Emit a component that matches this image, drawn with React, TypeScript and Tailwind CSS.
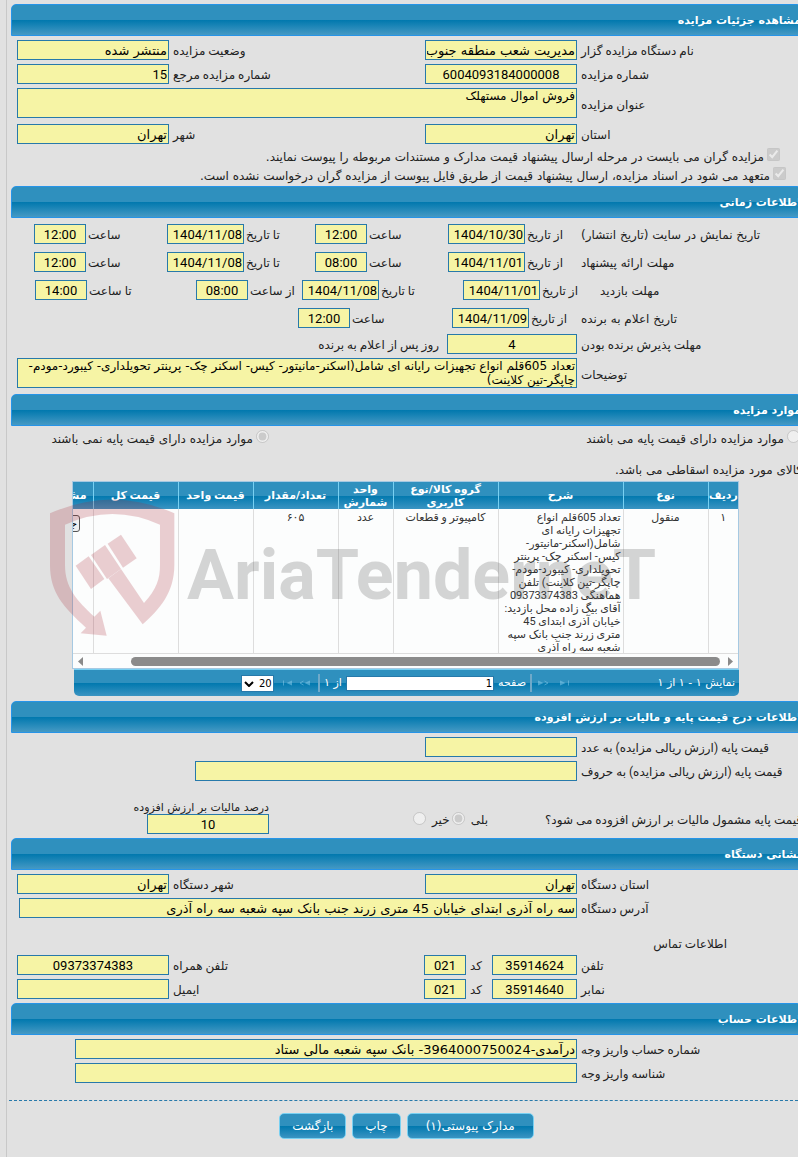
import { useId } from 'react';
import type { ReactNode } from 'react';
import clsx from 'clsx';

interface TextBoxProps {
  id?: string;
  value?: string;
  className?: string;
}

const TextBox: React.FC<TextBoxProps> = ({ id, value = '', className }) => (
  <input
    id={id}
    type="text"
    readOnly
    defaultValue={value}
    className={clsx(
      'h-5 min-w-0 border border-[#2779aa] bg-[#f6f4a5] px-px text-[13px] leading-4 text-black outline-none',
      // numbers use the narrower digits
      /^[\d/:]*$/.test(value)
        ? "font-['Roboto','DejaVu_Sans',sans-serif]"
        : "font-['DejaVu_Sans',sans-serif]",
      className,
    )}
  />
);

const Section = ({ title, children, className }: { title: string; children: ReactNode; className?: string }) => (
  <section>
    <h2 className="-mr-1 ml-1 h-8 rounded-t-[5px] border border-[#2694e8] bg-[linear-gradient(#2f90be_0%,#2f90be_50%,#0078ae_50%,#4599c4_100%)] font-['DejaVu_Sans',sans-serif] text-[11px] font-bold leading-8 text-white">
      {title}
    </h2>
    <div className={className}>{children}</div>
  </section>
);

interface FieldProps {
  label: string;
  value?: string;
  boxClass?: string;
}

// One label and its box, laid out as two cells of the row's grid
const Field: React.FC<FieldProps> = ({ label, value, boxClass }) => {
  const id = useId();
  return (
    <>
      <label htmlFor={id} className="whitespace-nowrap pl-1 pt-0.5 text-left leading-[18px]">
        {label}
      </label>
      <TextBox id={id} value={value} className={boxClass} />
    </>
  );
};

const Row = ({ children }: { children: ReactNode }) => (
  <div className="grid grid-cols-[221px_152px_1fr_152px]">{children}</div>
);

interface TextAreaFieldProps {
  label: string;
  value: string;
}

const TextAreaField: React.FC<TextAreaFieldProps> = ({ label, value }) => {
  const id = useId();
  return (
    <Row>
      <label htmlFor={id} className="self-center pl-1 pt-1 text-left leading-5">
        {label}
      </label>
      <textarea
        id={id}
        readOnly
        defaultValue={value}
        className="col-span-3 h-[30px] resize-none overflow-hidden border border-[#2779aa] bg-[#f6f4a5] px-px font-['DejaVu_Sans',sans-serif] text-[12px] leading-[14px] text-black outline-none"
      />
    </Row>
  );
};

interface Slot {
  label: string;
  value: string;
  labelClass: string;
  boxClass: string;
}

const DATE = 'w-[77px] text-right [direction:ltr]';
const TIME = 'w-[52px] text-center';

const timeRows: { title: string; titleClass: string; slots: Slot[] }[] = [
  {
    title: 'تاریخ نمایش در سایت (تاریخ انتشار)',
    titleClass: 'w-[217px]',
    slots: [
      { label: 'از تاریخ', value: '1404/10/30', labelClass: 'w-14', boxClass: DATE },
      { label: 'ساعت', value: '12:00', labelClass: 'w-[81px]', boxClass: TIME },
      { label: 'تا تاریخ', value: '1404/11/08', labelClass: 'w-[71px]', boxClass: DATE },
      { label: 'ساعت', value: '12:00', labelClass: 'w-[81px]', boxClass: TIME },
    ],
  },
  {
    title: 'مهلت ارائه پیشنهاد',
    titleClass: 'w-[217px]',
    slots: [
      { label: 'از تاریخ', value: '1404/11/01', labelClass: 'w-14', boxClass: DATE },
      { label: 'ساعت', value: '08:00', labelClass: 'w-[81px]', boxClass: TIME },
      { label: 'تا تاریخ', value: '1404/11/08', labelClass: 'w-[71px]', boxClass: DATE },
      { label: 'ساعت', value: '12:00', labelClass: 'w-[81px]', boxClass: TIME },
    ],
  },
  {
    title: 'مهلت بازدید',
    titleClass: 'w-[198px]',
    slots: [
      { label: 'از تاریخ', value: '1404/11/01', labelClass: 'w-[60px]', boxClass: DATE },
      { label: 'تا تاریخ', value: '1404/11/08', labelClass: 'w-[84px]', boxClass: DATE },
      { label: 'از ساعت', value: '08:00', labelClass: 'w-[54px]', boxClass: TIME },
      { label: 'تا ساعت', value: '14:00', labelClass: 'w-[109px]', boxClass: TIME },
    ],
  },
  {
    title: 'تاریخ اعلام به برنده',
    titleClass: 'w-[217px]',
    slots: [
      { label: 'از تاریخ', value: '1404/11/09', labelClass: 'w-[52px]', boxClass: DATE },
      { label: 'ساعت', value: '12:00', labelClass: 'w-[102px]', boxClass: TIME },
    ],
  },
];

const TimeSlot: React.FC<Slot> = ({ label, value, labelClass, boxClass }) => {
  const id = useId();
  return (
    <>
      <label htmlFor={id} className={clsx('shrink-0 whitespace-nowrap pl-0.5 pt-0.5 text-left', labelClass)}>
        {label}
      </label>
      <TextBox id={id} value={value} className={boxClass} />
    </>
  );
};

interface ChoiceProps {
  type: 'checkbox' | 'radio';
  name?: string;
  checked?: boolean;
  children: ReactNode;
  className?: string;
}

const Choice: React.FC<ChoiceProps> = ({ type, name, checked, children, className }) => (
  <label
    className={clsx("flex items-start gap-[3px] whitespace-nowrap font-['DejaVu_Sans',sans-serif] leading-[18px]", className)}
  >
    <input type={type} name={name} defaultChecked={checked} disabled className="m-0 size-[13px] shrink-0" />
    {children}
  </label>
);

const BAR = 'bg-[linear-gradient(#2f90be_0%,#2f90be_50%,#0078ae_50%,#3a94c2_100%)]';

const columns = [
  { title: 'ردیف', width: 'w-[30px]' },
  { title: 'نوع', width: 'w-[85px]' },
  { title: 'شرح', width: 'w-[125px]' },
  { title: 'گروه کالا/نوع کاربری', width: 'w-[105px]' },
  { title: 'واحد شمارش', width: 'w-[55px]' },
  { title: 'تعداد/مقدار', width: 'w-[85px]' },
  { title: 'قیمت واحد', width: 'w-[75px]' },
  { title: 'قیمت کل', width: 'w-[85px]' },
  { title: 'مشخصات', width: 'w-[65px]' },
];

const ItemsTable = () => (
  <table className="w-[710px] table-fixed border-collapse text-[11px] leading-[13px]">
    <thead>
      <tr className={clsx('h-[27px] text-white', BAR)}>
        {columns.map((c) => (
          <th
            key={c.title}
            className={clsx('h-[27px] border-l border-[#78d0f2] p-0 text-center align-middle font-bold', c.width)}
          >
            {c.title}
          </th>
        ))}
      </tr>
    </thead>
    <tbody>
      <tr className="align-top text-[#333] [&>td]:border-l [&>td]:border-[#dddddd] [&>td]:px-0.5 [&>td]:pt-0.5 [&>td]:text-center">
        <td>۱</td>
        <td>منقول</td>
        <td>
          <p className="h-[142px] overflow-hidden whitespace-nowrap text-right">
            تعداد 605قلم انواع
            <br />
            تجهیزات رایانه ای
            <br />
            شامل(اسکنر-مانیتور-
            <br />
            کیس- اسکنر چک- پرینتر
            <br />
            تحویلداری- کیبورد-مودم-
            <br />
            چاپگر-تین کلاینت) تلفن
            <br />
            هماهنگی 09373374383
            <br />
            آقای بیگ زاده محل بازدید:
            <br />
            خیابان آذری ابتدای 45
            <br />
            متری زرند جنب بانک سپه
            <br />
            شعبه سه راه آذری
          </p>
        </td>
        <td>کامپیوتر و قطعات</td>
        <td>عدد</td>
        <td>۶۰۵</td>
        <td />
        <td />
        <td>
          <button
            type="button"
            className="mt-1 h-[17px] rounded-[3px] border border-[#555] bg-[#efefef] px-0.5 leading-3 text-black"
          >
            جزئیات
          </button>
        </td>
      </tr>
    </tbody>
  </table>
);

const PagerArrow = ({ label, end, flip }: { label: string; end?: boolean; flip?: boolean }) => (
  <button type="button" disabled aria-label={label} className="opacity-50">
    <svg width="10" height="6" viewBox="0 0 10 6" className={clsx('fill-[#8fd0ee] stroke-[#8fd0ee]', flip && '-scale-x-100')}>
      <path d="M0 0.5 5.5 3 0 5.5Z" stroke="none" />
      {end ? <path d="M8.5 0.5v5" /> : <path d="M6.5 1 10 3 6.5 5" fill="none" />}
    </svg>
  </button>
);

const Pager = () => (
  <div
    className={clsx(
      "ml-0.5 flex h-[27px] items-center rounded-b-[5px] border-t border-[#78d0f2] pr-1 font-['DejaVu_Sans',sans-serif] text-[11px] text-white",
      BAR,
    )}
  >
    <span className="w-[165px]">نمایش ۱ - ۱ از ۱</span>
    <div className="flex items-center gap-3">
      <PagerArrow label="صفحه آخر" end />
      <PagerArrow label="صفحه بعد" />
    </div>
    <span className="mr-1.5 h-[18px] w-0.5 bg-[#6fa9c9]" />
    <label htmlFor="page" className="mr-1 whitespace-nowrap">
      صفحه
    </label>
    <input
      id="page"
      type="text"
      readOnly
      defaultValue="1"
      className="mr-1 h-[15px] min-w-0 flex-1 border border-[#2779aa] bg-white px-px text-[10px] text-black outline-none"
    />
    <span className="mr-1">از ۱</span>
    <span className="mr-1 h-[18px] w-0.5 bg-[#6fa9c9]" />
    <div className="mr-2 flex items-center gap-2">
      <PagerArrow label="صفحه قبل" flip />
      <PagerArrow label="صفحه اول" end flip />
    </div>
    <div className="relative mr-2 ml-[167px] h-[17px] w-[33px]">
      <select
        aria-label="تعداد ردیف"
        dir="ltr"
        className="h-[17px] w-[33px] appearance-none border border-[#2779aa] bg-white pl-[17px] text-[10px] text-black"
      >
        <option>20</option>
      </select>
      <svg viewBox="0 0 10 6" className="pointer-events-none absolute left-[3px] top-[6px] h-1.5 w-2.5 fill-none stroke-black stroke-2">
        <path d="M1 1l4 4 4-4" />
      </svg>
    </div>
  </div>
);

const Watermark = () => (
  <svg
    aria-hidden="true"
    width="640"
    height="160"
    viewBox="0 0 640 160"
    className="pointer-events-none absolute -left-[27px] -top-0.5 opacity-[0.22]"
  >
    <g transform="scale(0.33333)" fill="#a92937">
      <path d="M15 103Q202 20 388 103V258C388 340 345 390 293 436L190 298 228 270 297 372C335 330 345 300 345 258V137Q202 73 60 137V258C60 325 95 365 148 413L166 395 185 470 107 463 123 446C55 385 15 340 15 258Z" />
      <path d="M138 228 180 198 228 270 186 300Z" />
      <path d="M92 260 131 232 178 300 138 330Z" />
      <path d="M188 194 228 167 275 238 234 266Z" />
    </g>
    <text direction="ltr" x="142" y="120" className="fill-[#454545] font-['Roboto',sans-serif] text-[70px] font-bold">
      AriaTenderneT
    </text>
  </svg>
);

const ActionButton = ({ children, className = 'px-3' }: { children: ReactNode; className?: string }) => (
  <button
    type="button"
    className={clsx(
      "h-[26px] rounded-[5px] border border-[#78d0f2] font-['DejaVu_Sans',sans-serif] text-[12px] leading-6 text-white",
      BAR,
      className,
    )}
  >
    {children}
  </button>
);

const App: React.FC = () => {
  return (
    <main
      dir="rtl"
      className="min-h-screen overflow-hidden bg-[#e1e1e1] pl-1.5 font-['Roboto','DejaVu_Sans',sans-serif] text-[12px] text-[#222]"
    >
      <div className="border-l border-[#c8c8c8] pt-1 pb-[18px]">
        <Section title="مشاهده جزئیات مزایده" className="space-y-1 pt-1 pb-1 pl-2.5">
          <Row>
            <Field label="نام دستگاه مزایده گزار" value="مدیریت شعب منطقه جنوب" />
            <Field label="وضعیت مزایده" value="منتشر شده" />
          </Row>
          <Row>
            <Field label="شماره مزایده" value="6004093184000008" boxClass="text-center" />
            <Field label="شماره مزایده مرجع" value="15" />
          </Row>
          <TextAreaField label="عنوان مزایده" value="فروش اموال مستهلک" />
          <div className="pt-0.5">
            <Row>
              <Field label="استان" value="تهران" />
              <Field label="شهر" value="تهران" />
            </Row>
          </div>
          <Choice type="checkbox" checked className="mr-[18px] h-[15px]">
            مزایده گران می بایست در مرحله ارسال پیشنهاد قیمت مدارک و مستندات مربوطه را پیوست نمایند.
          </Choice>
          <Choice type="checkbox" checked className="mr-3 h-[15px]">
            متعهد می شود در اسناد مزایده، ارسال پیشنهاد قیمت از طریق فایل پیوست از مزایده گران درخواست نشده است.
          </Choice>
        </Section>

        <Section title="اطلاعات زمانی" className="pt-1.5 pb-1.5 pl-2.5">
          <div className="space-y-2">
            {timeRows.map((row) => (
              <div key={row.title} className="flex h-5 items-center">
                <span
                  className={clsx(
                    "shrink-0 whitespace-nowrap pt-0.5 text-left font-['DejaVu_Sans',sans-serif]",
                    row.titleClass,
                  )}
                >
                  {row.title}
                </span>
                {row.slots.map((slot, i) => (
                  <TimeSlot key={i} {...slot} />
                ))}
              </div>
            ))}
          </div>
          <div className="mt-1.5 mb-1 flex h-5 items-center">
            <label htmlFor="accept" className="w-[221px] shrink-0 pl-1 pt-0.5 text-left">
              مهلت پذیرش برنده بودن
            </label>
            <TextBox id="accept" value="4" className="w-[130px] text-center" />
            <span className="mr-2 pt-0.5">روز پس از اعلام به برنده</span>
          </div>
          <TextAreaField
            label="توضیحات"
            value="تعداد 605قلم انواع تجهیزات رایانه ای شامل(اسکنر-مانیتور- کیس- اسکنر چک- پرینتر تحویلداری- کیبورد-مودم-چاپگر-تین کلاینت)"
          />
        </Section>

        <Section title="موارد مزایده" className="pb-[5px]">
          <div className="-mr-0.5 flex pt-1">
            <Choice type="radio" name="base" className="w-[531px]">
              موارد مزایده دارای قیمت پایه می باشند
            </Choice>
            <Choice type="radio" name="base" checked>
              موارد مزایده دارای قیمت پایه نمی باشند
            </Choice>
          </div>
          <p className="-mr-1 mt-[14px] mb-[3px] font-['DejaVu_Sans',sans-serif] leading-4">
            کالای مورد مزایده اسقاطی می باشد.
          </p>
          <div className="relative mr-[59px] ml-[65px]">
            <div className="overflow-hidden border border-[#a6c9e2] bg-[#fcfdfd]">
              <ItemsTable />
              <div className="flex h-[15px] items-center justify-between border-t border-[#dddddd] px-[5px]">
                <svg width="5" height="9" viewBox="0 0 5 9" className="fill-[#8a8a8a]">
                  <path d="M0 0 5 4.5 0 9Z" />
                </svg>
                <span className="mr-2 ml-12 h-[9px] flex-1 rounded-full bg-[#8b8b8b]" />
                <svg width="5" height="9" viewBox="0 0 5 9" className="fill-[#8a8a8a]">
                  <path d="M5 0 0 4.5 5 9Z" />
                </svg>
              </div>
            </div>
            <Pager />
            <Watermark />
          </div>
        </Section>

        <Section title="اطلاعات درج قیمت پایه و مالیات بر ارزش افزوده" className="space-y-1 pt-1 pb-1 pl-2.5">
          <Row>
            <Field label="قیمت پایه (ارزش ریالی مزایده) به عدد" />
          </Row>
          <div className="ml-[178px] grid grid-cols-[221px_1fr]">
            <Field label="قیمت پایه (ارزش ریالی مزایده) به حروف" />
          </div>
          <div className="flex justify-between pt-4">
            <div className="flex items-center pt-1">
              <span className="-mr-1 w-[255px] whitespace-nowrap">قیمت پایه مشمول مالیات بر ارزش افزوده می شود؟</span>
              <label className="mr-[59px] flex gap-1.5 leading-4">
                بلی
                <input type="radio" name="vat" defaultChecked disabled className="m-0 size-[13px]" />
              </label>
              <label className="mr-0.5 flex gap-1.5 leading-4">
                خیر
                <input type="radio" name="vat" disabled className="m-0 size-[13px]" />
              </label>
            </div>
            <div className="ml-[130px] flex w-[122px] flex-col">
              <label
                htmlFor="percent"
                className="whitespace-nowrap font-['DejaVu_Sans',sans-serif] text-[11px] leading-[13px]"
              >
                درصد مالیات بر ارزش افزوده
              </label>
              <TextBox id="percent" value="10" className="text-center" />
            </div>
          </div>
        </Section>

        <Section title="نشانی دستگاه" className="space-y-1 pt-1 pb-1 pl-2.5">
          <Row>
            <Field label="استان دستگاه" value="تهران" />
            <Field label="شهر دستگاه" value="تهران" />
          </Row>
          <div className="ml-0.5 grid grid-cols-[221px_1fr]">
            <Field
              label="آدرس دستگاه"
              value="سه راه آذری ابتدای خیابان 45 متری زرند جنب بانک سپه شعبه سه راه آذری"
            />
          </div>
          <h3 className="mr-[71px] pt-[15px] leading-[14px]">اطلاعات تماس</h3>
          <div className="grid grid-cols-[221px_85px_26px_42px_1fr_152px]">
            <Field label="تلفن" value="35914624" boxClass="text-center" />
            <Field label="کد" value="021" boxClass="text-center" />
            <Field label="تلفن همراه" value="09373374383" boxClass="text-center" />
          </div>
          <div className="grid grid-cols-[221px_85px_26px_42px_1fr_152px]">
            <Field label="نمابر" value="35914640" boxClass="text-center" />
            <Field label="کد" value="021" boxClass="text-center" />
            <Field label="ایمیل" />
          </div>
        </Section>

        <Section title="اطلاعات حساب" className="space-y-1 pt-1 pb-[17px] pl-[68px]">
          <div className="grid grid-cols-[221px_1fr]">
            <Field label="شماره حساب واریز وجه" value="درآمدی-3964000750024- بانک سپه شعبه مالی ستاد" />
          </div>
          <div className="grid grid-cols-[221px_1fr]">
            <Field label="شناسه واریز وجه" />
          </div>
        </Section>

        <div className="ml-0.5 border-t border-dashed border-[#2779aa]" />
        <div className="flex justify-center gap-1.5 pl-2 pt-3">
          <ActionButton className="px-[18px]">مدارک پیوستی(۱)</ActionButton>
          <ActionButton>چاپ</ActionButton>
          <ActionButton>بازگشت</ActionButton>
        </div>
      </div>
    </main>
  );
};

export default App;
